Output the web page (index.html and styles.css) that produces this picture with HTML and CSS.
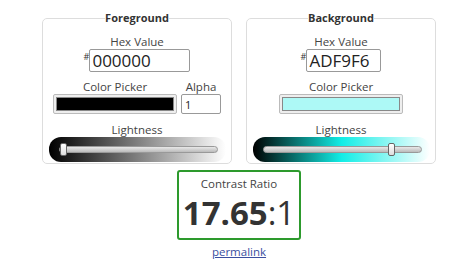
FILE: index.html
```html
<!DOCTYPE html>
<html lang="en">
    <head>
        <meta charset="UTF-8" />
        <meta name="viewport" content="width=device-width, initial-scale=1.0" />
        <title>Contrast Checker</title>
        <link rel="stylesheet" href="styles.css">
    </head>
    <body>
        <div class="colors">
            <fieldset class="panel">
                <legend>Foreground</legend>
                <label class="label hex-label">Hex Value</label>
                <div class="hex-row">
                    <span class="hash">#</span>
                    <input class="hex fg-hex" type="text" value="000000">
                </div>
                <div class="picker-row">
                    <div class="picker-col">
                        <label class="label">Color Picker</label>
                        <div class="swatch"><div class="swatch-fill fg-fill"></div></div>
                    </div>
                    <div class="alpha-col">
                        <label class="label">Alpha</label>
                        <input class="alpha" type="text" value="1">
                    </div>
                </div>
                <label class="label">Lightness</label>
                <input class="lightness fg-light" type="range" min="0" max="100" value="0">
            </fieldset>
            <fieldset class="panel">
                <legend>Background</legend>
                <label class="label hex-label">Hex Value</label>
                <div class="hex-row">
                    <span class="hash">#</span>
                    <input class="hex bg-hex" type="text" value="ADF9F6">
                </div>
                <div class="picker-row">
                    <div class="picker-col">
                        <label class="label">Color Picker</label>
                        <div class="swatch"><div class="swatch-fill bg-fill"></div></div>
                    </div>
                </div>
                <label class="label">Lightness</label>
                <input class="lightness bg-light" type="range" min="0" max="100" value="83">
            </fieldset>
        </div>
        <div class="result">
            <div class="ratio-box">
                <div class="ratio-label">Contrast Ratio</div>
                <div class="ratio"><b>17.65</b>:1</div>
            </div>
            <a class="permalink" href="#">permalink</a>
        </div>
    </body>
</html>
```

FILE: styles.css
```css
body {
    margin: 10px 8px 0 28px;
    font-family: "Open Sans", sans-serif;
    color: #333;
}
.colors {
    display: flex;
    justify-content: center;
    gap: 14px;
}
.panel {
    width: 190px;
    box-sizing: border-box;
    margin: 0;
    padding: 0 4px 1px;
    border: 1px solid #ddd;
    border-radius: 5px;
    display: flex;
    flex-direction: column;
    align-items: center;
}
legend {
    font-size: 11px;
    font-weight: bold;
    padding: 0;
    margin: 0 auto;
    line-height: 16px;
}
.label {
    font-size: 11.5px;
    line-height: 15px;
    color: #444;
}
.hex-label {
    margin-top: 8px;
}
.hex-row {
    display: flex;
    align-items: flex-start;
    margin-bottom: 7px;
}
.hash {
    font-size: 9px;
    line-height: 12px;
    margin-top: 2px;
}
.hex {
    font-family: "Open Sans", sans-serif;
    font-size: 17px;
    color: #222;
    height: 23px;
    box-sizing: border-box;
    padding: 0 2px;
    border: 1px solid #999;
    border-radius: 2px;
}
.fg-hex {
    width: 101px;
}
.bg-hex {
    width: 75px;
}
.picker-row {
    display: flex;
    gap: 4px;
    align-items: flex-end;
    margin-bottom: 8px;
}
.picker-col,
.alpha-col {
    display: flex;
    flex-direction: column;
    align-items: center;
}
.swatch {
    width: 124px;
    height: 20px;
    box-sizing: border-box;
    border: 1px solid #bbb;
    border-radius: 2px;
    padding: 2px;
    background-color: #eee;
}
.swatch-fill {
    height: 100%;
    border: 1px solid #888;
    box-sizing: border-box;
}
.fg-fill {
    background-color: #000;
}
.bg-fill {
    background-color: #adf9f6;
}
.alpha {
    width: 40px;
    height: 20px;
    box-sizing: border-box;
    font-family: "Open Sans", sans-serif;
    font-size: 11px;
    color: #222;
    padding: 0 3px;
    border: 1px solid #999;
    border-radius: 2px;
}
.lightness {
    -webkit-appearance: none;
    appearance: none;
    width: 177px;
    height: 25px;
    margin: 0;
    padding: 0 8px 0 10px;
    box-sizing: border-box;
    border-radius: 12px;
}
.fg-light {
    background: linear-gradient(to right, #000, #fff);
}
.bg-light {
    background: linear-gradient(to right, #000, hsl(178, 86%, 50%), #fff);
}
.lightness::-webkit-slider-runnable-track {
    height: 7px;
    border: 1px solid #999;
    border-radius: 4px;
    background: linear-gradient(#e8e8e8, #bbb);
    background-color: rgba(220, 220, 220, 0.7);
}
.lightness::-webkit-slider-thumb {
    -webkit-appearance: none;
    width: 7px;
    height: 13px;
    margin-top: -4px;
    border: 1px solid #666;
    border-radius: 2px;
    background: linear-gradient(#fff, #ddd);
}
.result {
    display: flex;
    flex-direction: column;
    align-items: center;
    margin-top: 6px;
}
.ratio-box {
    width: 124px;
    height: 70px;
    box-sizing: border-box;
    border: 2px solid #2d9a2d;
    border-radius: 3px;
    text-align: center;
}
.ratio-label {
    font-size: 11.5px;
    line-height: 14px;
    margin-top: 5px;
    color: #444;
}
.ratio {
    font-size: 33px;
    line-height: 32px;
    margin-top: 6px;
    color: #333;
}
.permalink {
    font-size: 11.5px;
    margin-top: 4px;
    color: #3b4fa0;
}
```
